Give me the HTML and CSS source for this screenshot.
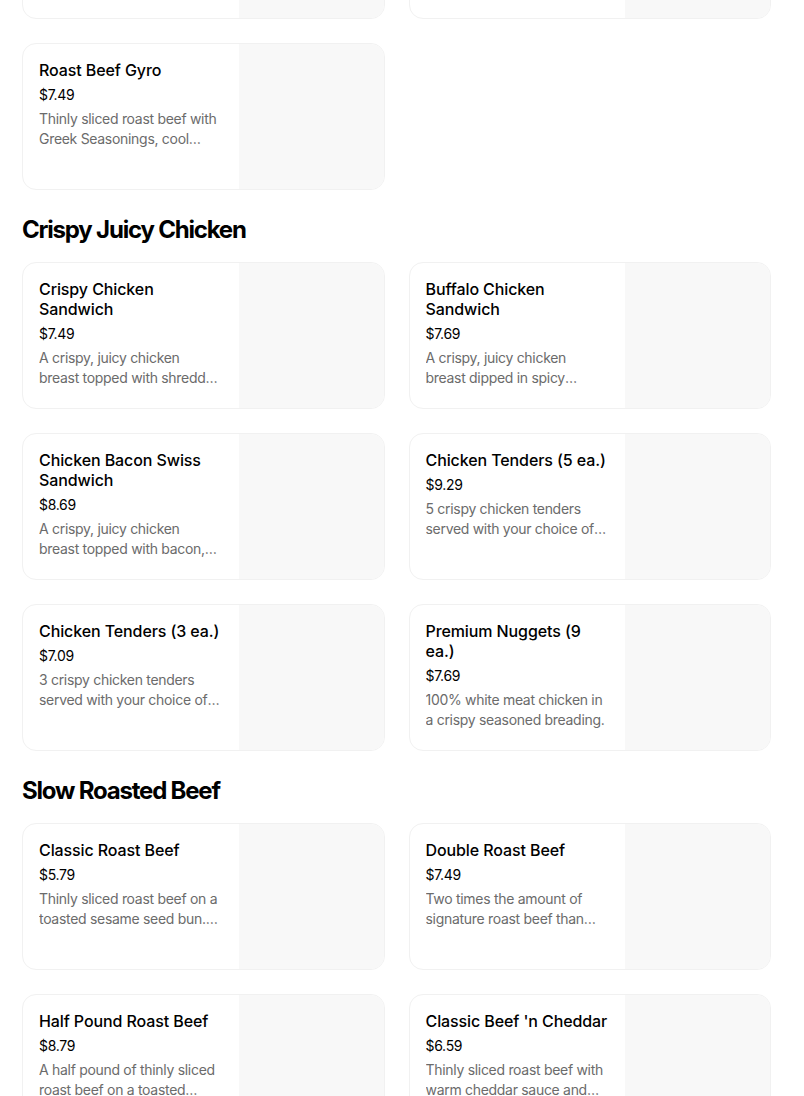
FILE: index.html
```html
<!DOCTYPE html>
<html lang="en">
<head>
<meta charset="utf-8">
<title>Menu</title>
<link rel="stylesheet" href="styles.css">
</head>
<body>
<main class="menu">
  <section class="section section-first">
    <div class="grid">
      <div class="card"><div class="info"><h3 class="title">Roast Beef Sandwich</h3><p class="price">$5.79</p><p class="desc">Thinly sliced roast beef on a toasted sesame seed bun.</p></div><div class="thumb"></div></div>
      <div class="card"><div class="info"><h3 class="title">Beef 'n Cheddar</h3><p class="price">$6.59</p><p class="desc">Thinly sliced roast beef with warm cheddar sauce.</p></div><div class="thumb"></div></div>
      <div class="card"><div class="info"><h3 class="title">Roast Beef Gyro</h3><p class="price">$7.49</p><p class="desc">Thinly sliced roast beef with Greek Seasonings, cool tzatziki sauce, tomatoes and red onions on a warm pita.</p></div><div class="thumb"></div></div>
    </div>
  </section>

  <section class="section">
    <h2 class="heading">Crispy Juicy Chicken</h2>
    <div class="grid">
      <div class="card"><div class="info"><h3 class="title">Crispy Chicken Sandwich</h3><p class="price">$7.49</p><p class="desc">A crispy, juicy chicken breast topped with shredded lettuce, tomato and mayo.</p></div><div class="thumb"></div></div>
      <div class="card"><div class="info"><h3 class="title">Buffalo Chicken Sandwich</h3><p class="price">$7.69</p><p class="desc">A crispy, juicy chicken breast dipped in spicy buffalo sauce.</p></div><div class="thumb"></div></div>
      <div class="card"><div class="info"><h3 class="title">Chicken Bacon Swiss Sandwich</h3><p class="price">$8.69</p><p class="desc">A crispy, juicy chicken breast topped with bacon, swiss cheese and honey mustard.</p></div><div class="thumb"></div></div>
      <div class="card"><div class="info"><h3 class="title">Chicken Tenders (5 ea.)</h3><p class="price">$9.29</p><p class="desc">5 crispy chicken tenders served with your choice of dipping sauce.</p></div><div class="thumb"></div></div>
      <div class="card"><div class="info"><h3 class="title">Chicken Tenders (3 ea.)</h3><p class="price">$7.09</p><p class="desc">3 crispy chicken tenders served with your choice of dipping sauce.</p></div><div class="thumb"></div></div>
      <div class="card"><div class="info"><h3 class="title">Premium Nuggets (9 ea.)</h3><p class="price">$7.69</p><p class="desc">100% white meat chicken in a crispy seasoned breading.</p></div><div class="thumb"></div></div>
    </div>
  </section>

  <section class="section">
    <h2 class="heading">Slow Roasted Beef</h2>
    <div class="grid">
      <div class="card"><div class="info"><h3 class="title">Classic Roast Beef</h3><p class="price">$5.79</p><p class="desc">Thinly sliced roast beef on a toasted sesame seed bun. Classic and simple.</p></div><div class="thumb"></div></div>
      <div class="card"><div class="info"><h3 class="title">Double Roast Beef</h3><p class="price">$7.49</p><p class="desc">Two times the amount of signature roast beef than standard classic sandwiches.</p></div><div class="thumb"></div></div>
      <div class="card"><div class="info"><h3 class="title">Half Pound Roast Beef</h3><p class="price">$8.79</p><p class="desc">A half pound of thinly sliced roast beef on a toasted sesame seed bun.</p></div><div class="thumb"></div></div>
      <div class="card"><div class="info"><h3 class="title">Classic Beef 'n Cheddar</h3><p class="price">$6.59</p><p class="desc">Thinly sliced roast beef with warm cheddar sauce and red ranch on an onion roll.</p></div><div class="thumb"></div></div>
    </div>
  </section>
</main>
</body>
</html>
```

FILE: styles.css
```css
* { box-sizing: border-box; }

html, body {
  margin: 0;
  padding: 0;
  background: #ffffff;
  overflow: hidden;
}

body {
  font-family: Inter, "Noto Sans", "Liberation Sans", sans-serif;
  color: #000000;
}

.menu {
  width: 749px;
  margin-left: 22px;
}

.section-first {
  margin-top: -128px;
}

.heading {
  margin: 24px 0 16px;
  font-size: 24px;
  line-height: 32px;
  font-weight: 700;
  letter-spacing: -1.2px;
}

.grid {
  display: grid;
  grid-template-columns: 1fr 1fr;
  gap: 24px;
}

.card {
  display: flex;
  height: 147px;
  border: 1px solid #f1f1f1;
  border-radius: 14px;
  overflow: hidden;
  background: #ffffff;
}

.info {
  flex: 1;
  min-width: 0;
  padding: 16px;
}

.thumb {
  width: 145px;
  flex: none;
  background: #f8f8f8;
}

.title {
  margin: 0 0 5px;
  font-size: 16px;
  line-height: 20px;
  font-weight: 500;
  letter-spacing: -0.1px;
}

.price {
  margin: 0 0 4px;
  font-size: 14px;
  line-height: 20px;
  font-weight: 400;
  letter-spacing: -0.3px;
}

.desc {
  margin: 0;
  font-size: 14px;
  line-height: 20px;
  color: #6b6b6b;
  letter-spacing: -0.3px;
  display: -webkit-box;
  -webkit-line-clamp: 2;
  -webkit-box-orient: vertical;
  overflow: hidden;
}
```
